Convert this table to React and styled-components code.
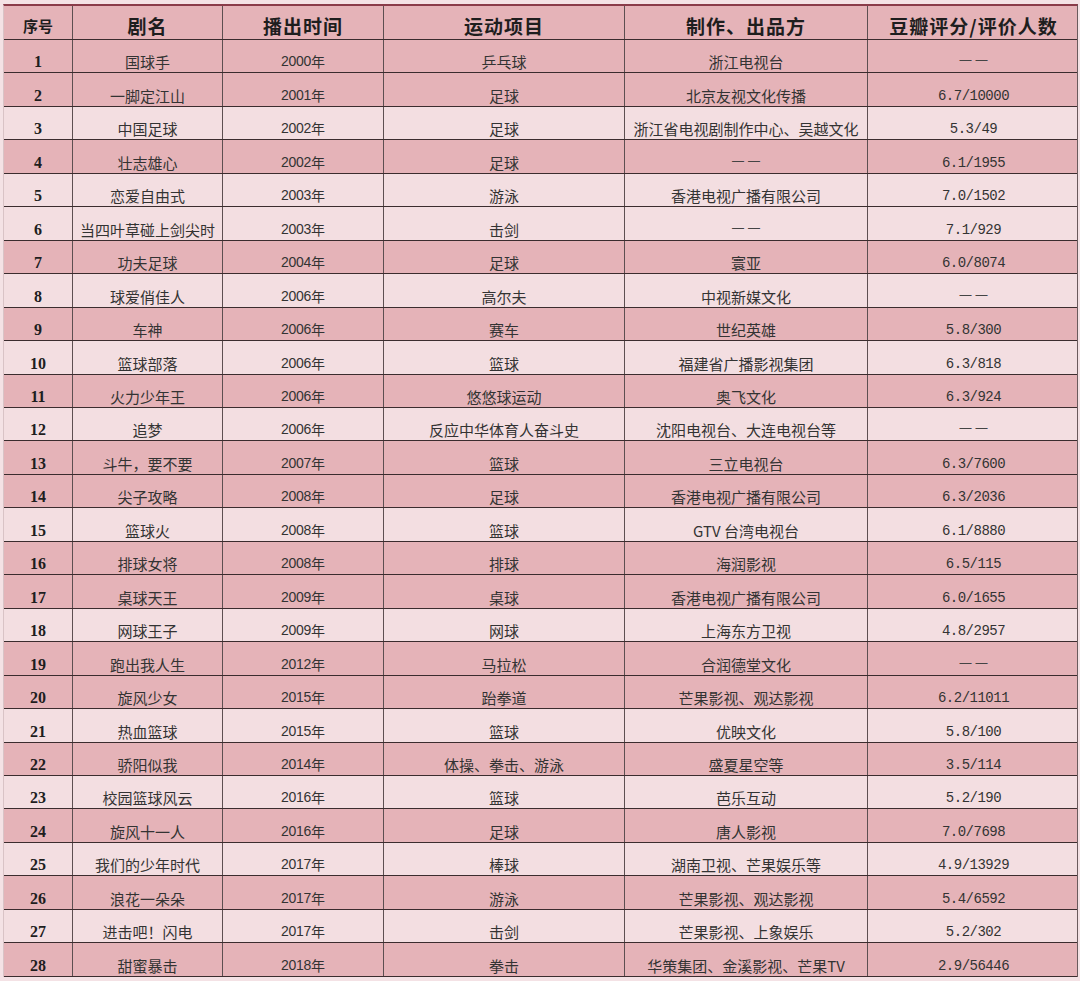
import React from "react";
import styled, { createGlobalStyle } from "styled-components";

const GlobalStyle = createGlobalStyle`
  html, body {
    margin: 0;
    padding: 0;
    background: #f4e2e5;
  }
  body {
    font-family: "Noto Sans CJK SC", "Liberation Sans", sans-serif;
    color: #2a2a2a;
  }
`;

const COLUMNS = "68px 150px 161px 241px 243px 212px";

const Page = styled.div`
  width: 1080px;
  height: 981px;
  padding: 4px 2px 0 3px;
  box-sizing: border-box;
`;

const Table = styled.div`
  width: 1075px;
  border-top: 2px solid #8a3b49;
  border-right: 1px solid #6a5a5c;
  border-left: 1px solid #d9c3c6;
  box-sizing: border-box;
`;

const Row = styled.div`
  display: grid;
  grid-template-columns: ${COLUMNS};
  height: ${(p) => (p.$head ? "34px" : "33.46px")};
  background: ${(p) => (p.$light ? "#f3dee1" : "#e5b3b8")};
  border-bottom: 1px solid #3b2c2e;
  box-sizing: border-box;
`;

const Cell = styled.div`
  display: flex;
  align-items: flex-end;
  justify-content: center;
  padding-bottom: 1px;
  border-left: 1px solid #5d4f51;
  font-size: 15px;
  line-height: 19px;
  white-space: nowrap;
  color: #333;
  &:first-child {
    border-left: none;
  }
`;

const HeadCell = styled(Cell)`
  font-family: "Noto Sans CJK SC", sans-serif;
  font-weight: 700;
  font-size: ${(p) => (p.$small ? "15px" : "19px")};
  letter-spacing: ${(p) => (p.$small ? "0" : "1px")};
  line-height: 24px;
  padding-bottom: 1px;
  color: #1e1e1e;
`;

const NumCell = styled(Cell)`
  font-family: "Liberation Serif", "DejaVu Serif", serif;
  font-weight: 700;
  font-size: 16px;
  line-height: 18px;
  padding-bottom: 1px;
  color: #1e1e1e;
`;

const YearCell = styled(Cell)`
  font-size: 14px;
  span {
    font-family: "Liberation Sans", sans-serif;
    font-size: 14px;
    letter-spacing: -0.3px;
  }
`;

const ScoreCell = styled(Cell)`
  font-family: "Liberation Mono", monospace;
  font-size: 14px;
  line-height: 18px;
  padding-bottom: 1px;
  letter-spacing: -0.5px;
`;

const Dash = styled.span`
  display: inline-flex;
  gap: 4px;
  margin-bottom: 5px;
  font-family: "Liberation Sans", sans-serif;
  font-size: 12px;
  line-height: 12px;
  color: #444;
`;

const rows = [
  ["国球手", "2000", "乒乓球", "浙江电视台", "——"],
  ["一脚定江山", "2001", "足球", "北京友视文化传播", "6.7/10000"],
  ["中国足球", "2002", "足球", "浙江省电视剧制作中心、吴越文化", "5.3/49"],
  ["壮志雄心", "2002", "足球", "——", "6.1/1955"],
  ["恋爱自由式", "2003", "游泳", "香港电视广播有限公司", "7.0/1502"],
  ["当四叶草碰上剑尖时", "2003", "击剑", "——", "7.1/929"],
  ["功夫足球", "2004", "足球", "寰亚", "6.0/8074"],
  ["球爱俏佳人", "2006", "高尔夫", "中视新媒文化", "——"],
  ["车神", "2006", "赛车", "世纪英雄", "5.8/300"],
  ["篮球部落", "2006", "篮球", "福建省广播影视集团", "6.3/818"],
  ["火力少年王", "2006", "悠悠球运动", "奥飞文化", "6.3/924"],
  ["追梦", "2006", "反应中华体育人奋斗史", "沈阳电视台、大连电视台等", "——"],
  ["斗牛，要不要", "2007", "篮球", "三立电视台", "6.3/7600"],
  ["尖子攻略", "2008", "足球", "香港电视广播有限公司", "6.3/2036"],
  ["篮球火", "2008", "篮球", "GTV 台湾电视台", "6.1/8880"],
  ["排球女将", "2008", "排球", "海润影视", "6.5/115"],
  ["桌球天王", "2009", "桌球", "香港电视广播有限公司", "6.0/1655"],
  ["网球王子", "2009", "网球", "上海东方卫视", "4.8/2957"],
  ["跑出我人生", "2012", "马拉松", "合润德堂文化", "——"],
  ["旋风少女", "2015", "跆拳道", "芒果影视、观达影视", "6.2/11011"],
  ["热血篮球", "2015", "篮球", "优映文化", "5.8/100"],
  ["骄阳似我", "2014", "体操、拳击、游泳", "盛夏星空等", "3.5/114"],
  ["校园篮球风云", "2016", "篮球", "芭乐互动", "5.2/190"],
  ["旋风十一人", "2016", "足球", "唐人影视", "7.0/7698"],
  ["我们的少年时代", "2017", "棒球", "湖南卫视、芒果娱乐等", "4.9/13929"],
  ["浪花一朵朵", "2017", "游泳", "芒果影视、观达影视", "5.4/6592"],
  ["进击吧！闪电", "2017", "击剑", "芒果影视、上象娱乐", "5.2/302"],
  ["甜蜜暴击", "2018", "拳击", "华策集团、金溪影视、芒果TV", "2.9/56446"],
];

// rows drawn in the lighter shade
const lightRows = new Set([3, 5, 6, 8, 10, 12, 15, 18, 21, 23, 25, 27]);

const NoData = () => (
  <Dash>
    <span>—</span>
    <span>—</span>
  </Dash>
);

const App = () => {
  return (
    <>
      <GlobalStyle />
      <Page>
        <Table>
          <Row $head>
            <HeadCell $small>序号</HeadCell>
            <HeadCell>剧名</HeadCell>
            <HeadCell>播出时间</HeadCell>
            <HeadCell>运动项目</HeadCell>
            <HeadCell>制作、出品方</HeadCell>
            <HeadCell>豆瓣评分/评价人数</HeadCell>
          </Row>
          {rows.map(([name, year, sport, maker, score], i) => (
            <Row key={i} $light={lightRows.has(i + 1)}>
              <NumCell>{i + 1}</NumCell>
              <Cell>{name}</Cell>
              <YearCell>
                <span>{year}</span>年
              </YearCell>
              <Cell>{sport}</Cell>
              <Cell>{maker === "——" ? <NoData /> : maker}</Cell>
              {score === "——" ? (
                <Cell>
                  <NoData />
                </Cell>
              ) : (
                <ScoreCell>{score}</ScoreCell>
              )}
            </Row>
          ))}
        </Table>
      </Page>
    </>
  );
};

export default App;
